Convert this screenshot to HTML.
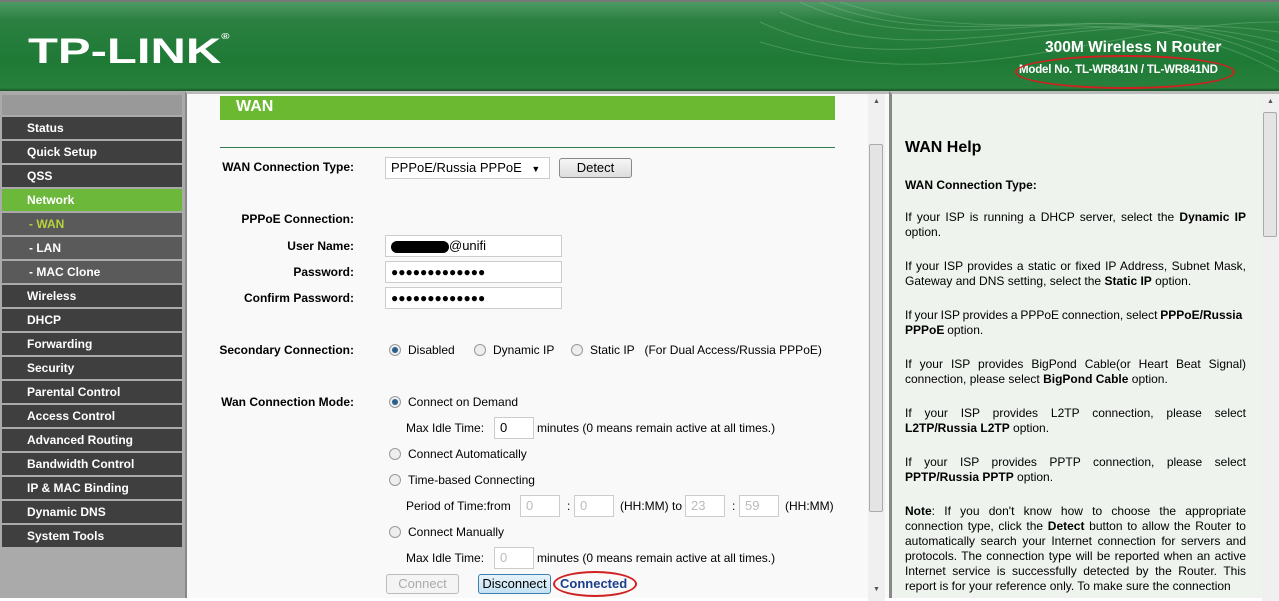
<!DOCTYPE html><html><head><style>
*{margin:0;padding:0;box-sizing:border-box}
body{width:1279px;height:598px;overflow:hidden;background:#fff;font-family:"Liberation Sans",sans-serif;font-size:12px;color:#000;position:relative}
.a{position:absolute}
#hdr{left:0;top:0;width:1279px;height:91px;background:linear-gradient(#4e9a66 0,#2b8040 18px,#1f7a36 60px,#27813d 86px,#1e5a2c 88px);border-top:2px solid #777}
#logo{left:28px;top:30px;color:#fff;font:bold 35px "Liberation Sans",sans-serif;letter-spacing:0;transform:scaleX(1.4);transform-origin:0 0}
#sb{left:0;top:91px;width:185px;height:507px;background:#aaa}
.it{position:absolute;left:2px;width:180px;height:22px;background:#3f3f3f;color:#fff;font-weight:bold;font-size:12px;line-height:22px;padding-left:25px}
.sub{background:#5a5a5a;padding-left:27px}
#main{left:185px;top:91px;width:704px;height:507px;background:#f9f9f9;border-left:2px solid #888;border-top:3px solid #bbb}
#help{left:889px;top:91px;width:390px;height:507px;background:#eef3ee;border-left:3px solid #888;border-top:3px solid #bbb}
.sbar{position:absolute;top:0;width:17px;height:507px;background:#f0f0f0}
.thumb{position:absolute;left:1px;width:14px;background:#e4e4e4;border:1px solid #aaa;border-radius:2px}
.lbl{position:absolute;font-weight:bold;text-align:right;width:200px}
.inp{position:absolute;height:22px;background:#fff;border:1px solid #ccc;font-size:13px;padding-left:5px;line-height:20px}
.r{position:absolute;width:12px;height:12px;border-radius:50%;border:1px solid #999;background:#eee}
.r.on::after{content:"";position:absolute;left:2px;top:2px;width:6px;height:6px;border-radius:50%;background:#2a5f8f}
.t{position:absolute;font-size:12px;white-space:nowrap}
.btn{position:absolute;height:20px;border:1px solid #888;border-radius:3px;background:linear-gradient(#f6f6f6,#ddd);text-align:center;line-height:18px;font-size:13px}
#help p{position:absolute;left:13px;width:341px;text-align:justify;font-size:12px;line-height:15px}
</style></head><body>
<div id="hdr" class="a">
<svg class="a" style="left:760px;top:0" width="519" height="88"><g fill="none" stroke="#8fc79b" stroke-opacity=".35" stroke-width="1">
<path d="M0 20 C150 90 300 0 519 30"/><path d="M20 10 C170 80 320 -10 519 40"/><path d="M40 0 C190 70 340 -20 519 50"/><path d="M60 0 C210 60 360 -20 519 60"/><path d="M80 0 C230 50 380 -10 519 70"/><path d="M0 40 C200 100 350 20 519 20"/></g></svg>
<div id="logo" class="a">TP-LINK<span style="font-size:8px;vertical-align:top">®</span></div>
<div class="a" style="left:1045px;top:37px;color:#fff;font-weight:bold;font-size:15.5px">300M Wireless N Router</div>
<div class="a" style="left:1019px;top:62px;color:#fff;font-weight:bold;font-size:11.5px;letter-spacing:-0.2px">Model No. TL-WR841N / TL-WR841ND</div>
<div class="a" style="left:1015px;top:53px;width:220px;height:34px;border:2px solid #d02020;border-radius:50%"></div>
</div>
<div id="sb" class="a">
<div class="it" style="top:4px;height:20px;background:#999"></div>
<div class="it" style="top:26px">Status</div>
<div class="it" style="top:50px">Quick Setup</div>
<div class="it" style="top:74px">QSS</div>
<div class="it" style="top:98px;background:#6cb83a">Network</div>
<div class="it sub" style="top:122px;color:#b6d33c">- WAN</div>
<div class="it sub" style="top:146px">- LAN</div>
<div class="it sub" style="top:170px">- MAC Clone</div>
<div class="it" style="top:194px">Wireless</div>
<div class="it" style="top:218px">DHCP</div>
<div class="it" style="top:242px">Forwarding</div>
<div class="it" style="top:266px">Security</div>
<div class="it" style="top:290px">Parental Control</div>
<div class="it" style="top:314px">Access Control</div>
<div class="it" style="top:338px">Advanced Routing</div>
<div class="it" style="top:362px">Bandwidth Control</div>
<div class="it" style="top:386px">IP &amp; MAC Binding</div>
<div class="it" style="top:410px">Dynamic DNS</div>
<div class="it" style="top:434px">System Tools</div>
<div class="it" style="top:458px;height:49px;background:#aaa"></div>
</div>
<div id="main" class="a">
<div class="a" style="left:33px;top:2px;width:615px;height:24px;background:#6ab931;color:#fff;font-weight:bold;font-size:16px;padding-left:16px;line-height:22px">WAN</div>
<div class="a" style="left:33px;top:53px;width:615px;height:1px;background:#2e7d4a"></div>
<div class="lbl" style="left:-33px;top:66px">WAN Connection Type:</div>
<div class="inp" style="left:198px;top:63px;width:165px">PPPoE/Russia PPPoE <span style="font-size:9px;margin-left:6px">▼</span></div>
<div class="btn" style="left:372px;top:64px;width:73px">Detect</div>
<div class="lbl" style="left:-33px;top:118px">PPPoE Connection:</div>
<div class="lbl" style="left:-33px;top:145px">User Name:</div>
<div class="inp" style="left:198px;top:141px;width:177px"><span style="display:inline-block;width:58px;height:12px;background:#000;border-radius:6px;vertical-align:middle"></span>@unifi</div>
<div class="lbl" style="left:-33px;top:171px">Password:</div>
<div class="inp" style="left:198px;top:167px;width:177px;font-size:12px;letter-spacing:0">●●●●●●●●●●●●●</div>
<div class="lbl" style="left:-33px;top:197px">Confirm Password:</div>
<div class="inp" style="left:198px;top:193px;width:177px;font-size:12px">●●●●●●●●●●●●●</div>
<div class="lbl" style="left:-33px;top:249px">Secondary Connection:</div>
<div class="r on" style="left:202px;top:250px"></div><div class="t" style="left:221px;top:249px">Disabled</div>
<div class="r" style="left:287px;top:250px"></div><div class="t" style="left:306px;top:249px">Dynamic IP</div>
<div class="r" style="left:384px;top:250px"></div><div class="t" style="left:403px;top:249px">Static IP &nbsp;&nbsp;(For Dual Access/Russia PPPoE)</div>
<div class="lbl" style="left:-33px;top:301px">Wan Connection Mode:</div>
<div class="r on" style="left:202px;top:302px"></div><div class="t" style="left:221px;top:301px">Connect on Demand</div>
<div class="t" style="left:219px;top:327px">Max Idle Time:</div>
<div class="inp" style="left:307px;top:323px;width:40px">0</div>
<div class="t" style="left:350px;top:327px">minutes (0 means remain active at all times.)</div>
<div class="r" style="left:202px;top:354px"></div><div class="t" style="left:221px;top:353px">Connect Automatically</div>
<div class="r" style="left:202px;top:380px"></div><div class="t" style="left:221px;top:379px">Time-based Connecting</div>
<div class="t" style="left:219px;top:405px">Period of Time:from</div>
<div class="inp" style="left:333px;top:401px;width:40px;color:#bbb">0</div><div class="t" style="left:380px;top:405px">:</div>
<div class="inp" style="left:387px;top:401px;width:40px;color:#bbb">0</div>
<div class="t" style="left:433px;top:405px">(HH:MM) to</div>
<div class="inp" style="left:498px;top:401px;width:40px;color:#bbb">23</div><div class="t" style="left:545px;top:405px">:</div>
<div class="inp" style="left:552px;top:401px;width:40px;color:#bbb">59</div>
<div class="t" style="left:598px;top:405px">(HH:MM)</div>
<div class="r" style="left:202px;top:432px"></div><div class="t" style="left:221px;top:431px">Connect Manually</div>
<div class="t" style="left:219px;top:457px">Max Idle Time:</div>
<div class="inp" style="left:307px;top:453px;width:40px;color:#bbb">0</div>
<div class="t" style="left:350px;top:457px">minutes (0 means remain active at all times.)</div>
<div class="btn" style="left:199px;top:480px;width:73px;color:#aaa;border-color:#bbb;background:#f4f4f4">Connect</div>
<div class="btn" style="left:291px;top:480px;width:73px;background:linear-gradient(#e6f3fb,#c4e2f3);border-color:#3c7fb1">Disconnect</div>
<div class="t" style="left:373px;top:482px;color:#1a3f8c;font-weight:bold;font-size:13px">Connected</div>
<div class="a" style="left:366px;top:477px;width:84px;height:26px;border:2px solid #d02020;border-radius:50%"></div>
<div class="sbar" style="left:681px"><div style="position:absolute;top:4px;left:5px;font-size:7px;color:#555">▲</div><div class="thumb" style="top:50px;height:368px"></div><div style="position:absolute;bottom:8px;left:5px;font-size:7px;color:#555">▼</div></div>
</div>
<div id="help" class="a">
<div class="a" style="left:13px;top:45px;font-weight:bold;font-size:16px">WAN Help</div>
<div class="a" style="left:13px;top:84px;font-weight:bold">WAN Connection Type:</div>
<p style="top:116px">If your ISP is running a DHCP server, select the <b>Dynamic IP</b> option.</p>
<p style="top:165px">If your ISP provides a static or fixed IP Address, Subnet Mask, Gateway and DNS setting, select the <b>Static IP</b> option.</p>
<p style="top:214px;width:348px;word-spacing:-0.5px">If your ISP provides a PPPoE connection, select <b>PPPoE/Russia</b><br><b>PPPoE</b> option.</p>
<p style="top:263px">If your ISP provides BigPond Cable(or Heart Beat Signal) connection, please select <b>BigPond Cable</b> option.</p>
<p style="top:312px">If your ISP provides L2TP connection, please select <b>L2TP/Russia L2TP</b> option.</p>
<p style="top:361px">If your ISP provides PPTP connection, please select <b>PPTP/Russia PPTP</b> option.</p>
<p style="top:410px"><b>Note</b>: If you don't know how to choose the appropriate connection type, click the <b>Detect</b> button to allow the Router to automatically search your Internet connection for servers and protocols. The connection type will be reported when an active Internet service is successfully detected by the Router. This report is for your reference only. To make sure the connection</p>
<div class="sbar" style="left:370px"><div style="position:absolute;top:4px;left:5px;font-size:7px;color:#555">▲</div><div class="thumb" style="top:18px;height:125px"></div></div>
</div>
</body></html>
